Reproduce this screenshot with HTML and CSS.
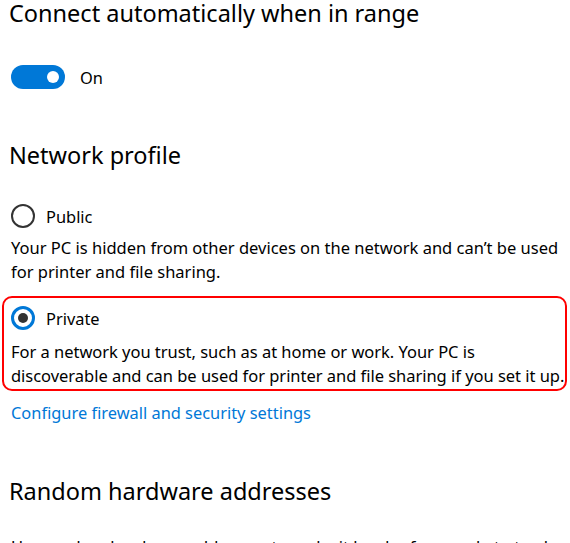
FILE: index.html
```html
<!DOCTYPE html>
<html>
<head>
<meta charset="utf-8">
<link rel="stylesheet" href="styles.css">
</head>
<body>
<div class="page">
  <h2 class="heading heading-first">Connect automatically when in range</h2>
  <div class="toggle-row">
    <span class="toggle"><span class="knob"></span></span>
    <span class="toggle-label">On</span>
  </div>

  <h2 class="heading heading-profile">Network profile</h2>

  <div class="option">
    <div class="radio-row">
      <span class="radio"></span>
      <span class="radio-label">Public</span>
    </div>
    <p class="desc">Your PC is hidden from other devices on the network and can’t be used for printer and file sharing.</p>
  </div>

  <div class="option option-selected">
    <div class="radio-row">
      <span class="radio radio-on"><span class="dot"></span></span>
      <span class="radio-label">Private</span>
    </div>
    <p class="desc">For a network you trust, such as at home or work. Your PC is discoverable and can be used for printer and file sharing if you set it up.</p>
  </div>

  <a class="link" href="#">Configure firewall and security settings</a>

  <h2 class="heading heading-random">Random hardware addresses</h2>
  <p class="desc desc-last">Use random hardware addresses to make it harder for people to track your location when this device connects to different networks.</p>
</div>
</body>
</html>
```

FILE: styles.css
```css
html, body {
  margin: 0;
  padding: 0;
  background: #ffffff;
  overflow: hidden;
}
body {
  width: 570px;
  height: 543px;
  font-family: "Noto Sans", "Open Sans", sans-serif;
  color: #000000;
}
.page {
  padding: 0 0 0 11px;
}
.heading {
  margin: 0;
  font-weight: 400;
  font-size: 23.5px;
  line-height: 28px;
  margin-left: -2px;
  color: #000;
}
.heading-first {
  margin-top: -1px;
}
.toggle-row {
  display: flex;
  align-items: center;
  margin-top: 38px;
  height: 24px;
}
.toggle {
  display: flex;
  align-items: center;
  justify-content: flex-end;
  width: 54px;
  height: 24px;
  border-radius: 12px;
  background: #0078d7;
  box-sizing: border-box;
  padding-right: 6px;
}
.knob {
  width: 12px;
  height: 12px;
  border-radius: 50%;
  background: #ffffff;
}
.toggle-label {
  margin-left: 15px;
  font-size: 16.4px;
}
.heading-profile {
  margin-top: 52px;
}
.option {
  margin-top: 35px;
}
.radio-row {
  display: flex;
  align-items: center;
  height: 24px;
}
.radio {
  display: flex;
  align-items: center;
  justify-content: center;
  width: 24px;
  height: 24px;
  border: 2px solid #333333;
  border-radius: 50%;
  box-sizing: border-box;
}
.radio-on {
  border: 3px solid #0078d7;
}
.dot {
  width: 10px;
  height: 10px;
  border-radius: 50%;
  background: #333333;
}
.radio-label {
  margin-left: 11px;
  font-size: 16.4px;
}
.desc {
  margin: 8px 0 0;
  font-size: 16.5px;
  line-height: 24px;
  padding-right: 2px;
}
.option-selected {
  margin: 12px 3px 0 -9px;
  border: 2px solid #ff0000;
  border-radius: 10px;
  padding: 8px 0 1px 7px;
}
.option-selected .desc {
  margin-top: 10px;
  margin-right: -6px;
  padding-right: 0;
  letter-spacing: -0.03px;
}
.link {
  display: block;
  margin-top: 10px;
  font-size: 16.4px;
  line-height: 24px;
  color: #0078d7;
  text-decoration: none;
}
.heading-random {
  margin-top: 52px;
}
.desc-last {
  margin-top: 30px;
}
```
